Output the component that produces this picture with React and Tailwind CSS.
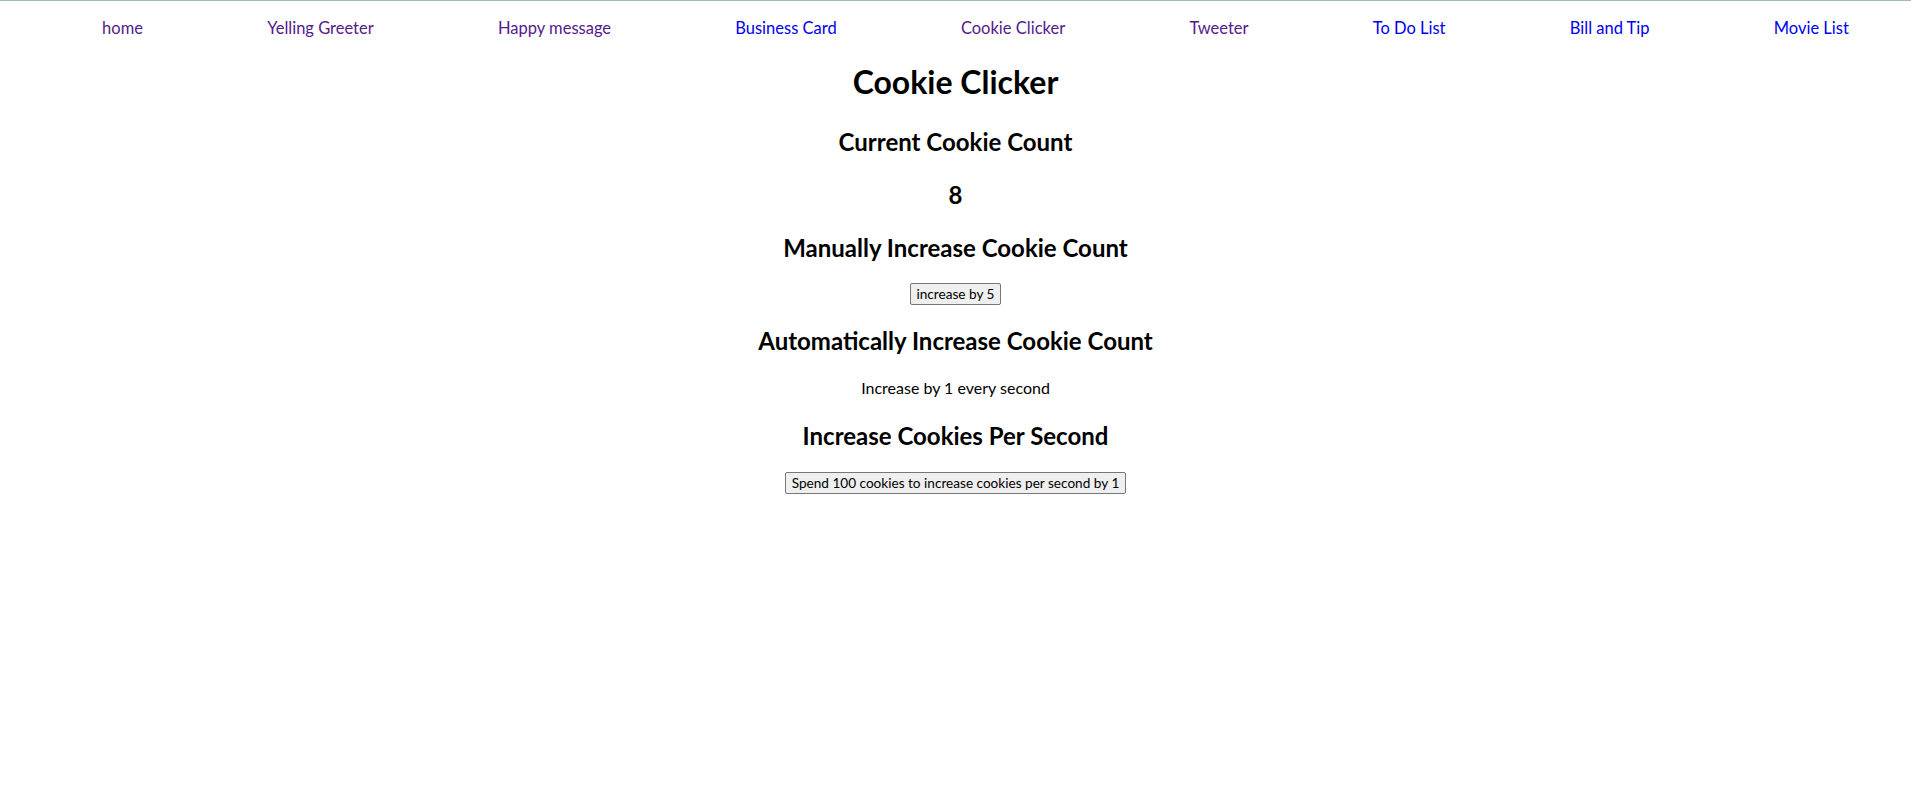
import { useState } from "react";

const links = [
  { label: "home", visited: true },
  { label: "Yelling Greeter", visited: true },
  { label: "Happy message", visited: true },
  { label: "Business Card", visited: false },
  { label: "Cookie Clicker", visited: true },
  { label: "Tweeter", visited: true },
  { label: "To Do List", visited: false },
  { label: "Bill and Tip", visited: false },
  { label: "Movie List", visited: false },
];

function App() {
  const [count, setCount] = useState(8);

  return (
    <div
      className="min-h-screen bg-white text-black border-t border-[#a3b9bb]"
      style={{ fontFamily: "Lato, 'Noto Sans', sans-serif" }}
    >
      <ul className="flex justify-around pl-10 my-4 text-[16.5px] leading-[22px]">
        {links.map((l) => (
          <li key={l.label}>
            <a
              href="#"
              className={l.visited ? "text-[#551a8b]" : "text-[#0000ee]"}
            >
              {l.label}
            </a>
          </li>
        ))}
      </ul>

      <div className="text-center">
        <h1 className="text-[32px] leading-[44px] font-bold mt-[21px] mb-[21px]">
          Cookie Clicker
        </h1>
        <h2 className="text-[24px] leading-[33px] font-bold my-[20px]">
          Current Cookie Count
        </h2>
        <h2 className="text-[24px] leading-[33px] font-bold my-[20px]">
          {count}
        </h2>
        <h2 className="text-[24px] leading-[33px] font-bold mt-[20px] mb-[19px]">
          Manually Increase Cookie Count
        </h2>
        <div className="flex justify-center">
          <button
            className="h-[22px] px-[6px] text-[13.6px] leading-[18px] bg-[#efefef] border border-[#767676] rounded-[2px]"
            onClick={() => setCount(count + 5)}
          >
            increase by 5
          </button>
        </div>
        <h2 className="text-[24px] leading-[33px] font-bold mt-[19px] mb-[20px]">
          Automatically Increase Cookie Count
        </h2>
        <p className="text-[16px] leading-[22px] my-4">
          Increase by 1 every second
        </p>
        <h2 className="text-[24px] leading-[33px] font-bold my-[20px]">
          Increase Cookies Per Second
        </h2>
        <div className="flex justify-center">
          <button className="h-[22px] px-[6px] text-[13.6px] leading-[18px] bg-[#efefef] border border-[#767676] rounded-[2px]">
            Spend 100 cookies to increase cookies per second by 1
          </button>
        </div>
      </div>
    </div>
  );
}

export default App;
